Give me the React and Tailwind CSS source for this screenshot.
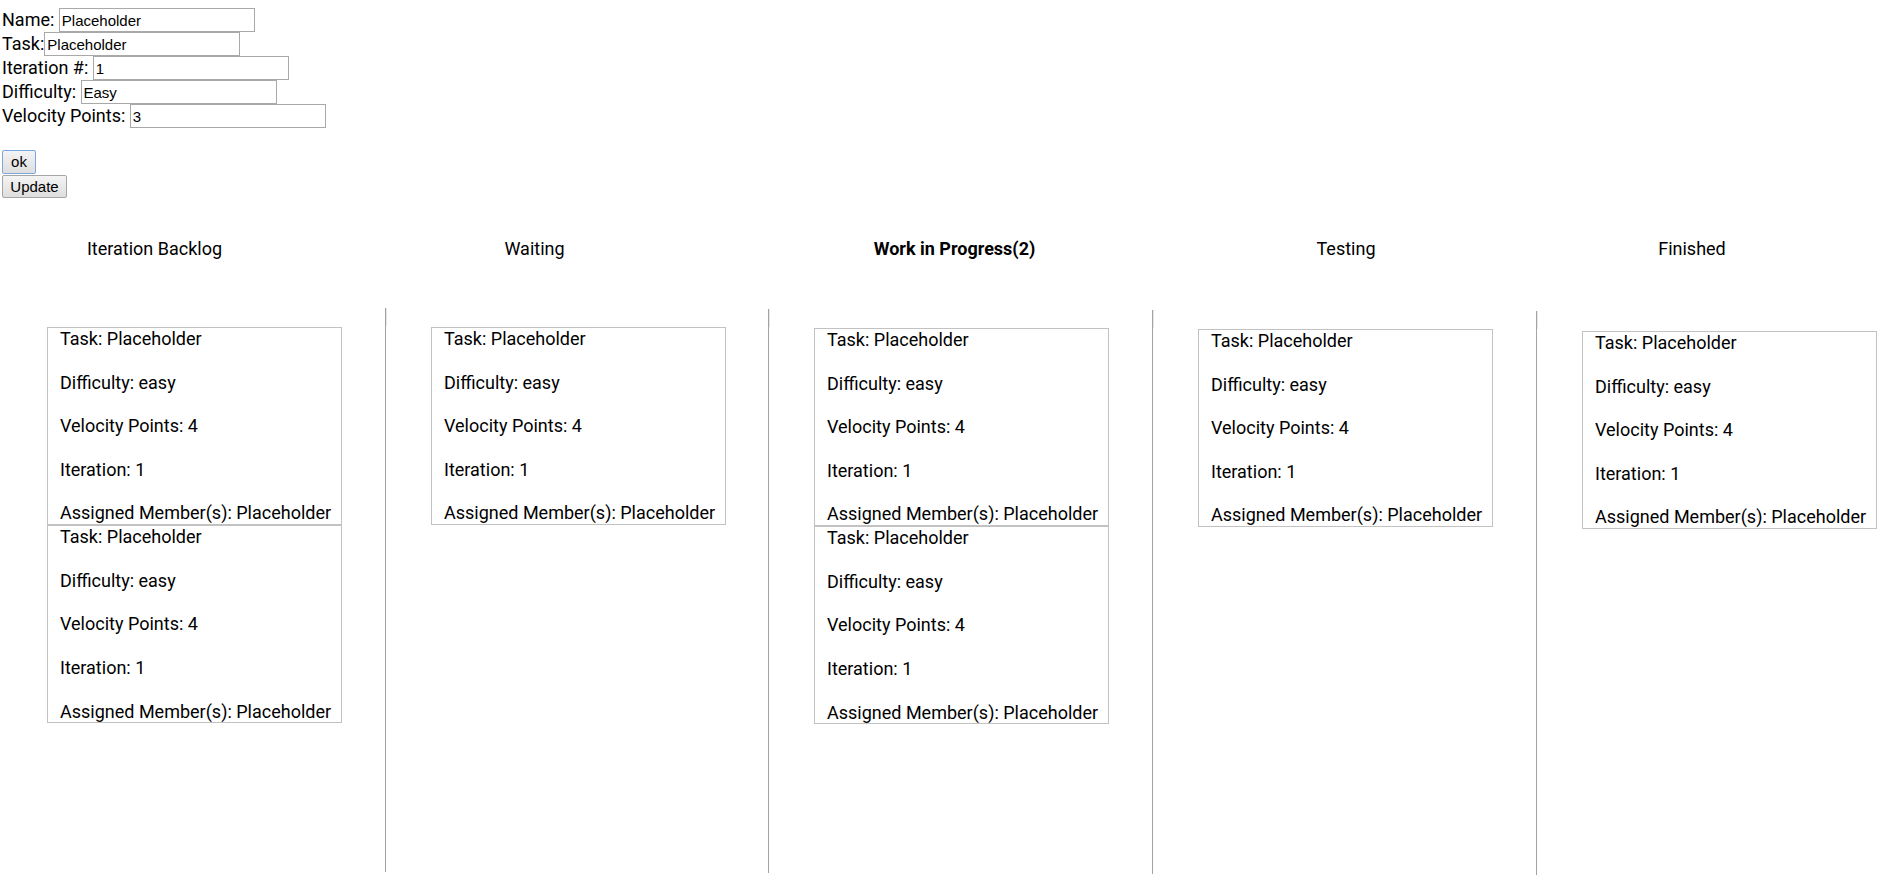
import React from 'react';

const fields = [
  { label: 'Name: ', value: 'Placeholder' },
  { label: 'Task:', value: 'Placeholder' },
  { label: 'Iteration #: ', value: '1' },
  { label: 'Difficulty: ', value: 'Easy' },
  { label: 'Velocity Points: ', value: '3' },
];

const card = {
  task: 'Placeholder',
  difficulty: 'easy',
  points: 4,
  iteration: 1,
  members: 'Placeholder',
};

// heading boxes are sized so each title lands where the board draws it
const headings = [
  { title: 'Iteration Backlog', box: 'w-[309px]' },
  { title: 'Waiting', box: 'w-[451px]' },
  { title: 'Work in Progress(2)', box: 'w-[389px] font-bold' },
  { title: 'Testing', box: 'w-[394px]' },
  { title: 'Finished', box: 'w-[298px]' },
];

const columns = [
  { id: 'backlog', width: 'w-[385px] border-transparent', top: 'mt-0', cardTop: 'mt-[19px] ml-[46px]', stub: false, cards: [card, card] },
  { id: 'waiting', width: 'w-[383px] border-[#a3a3a3]', top: 'mt-0', cardTop: 'mt-[19px] ml-[44px]', stub: true, cards: [card] },
  { id: 'wip', width: 'w-[384px] border-[#a3a3a3]', top: 'mt-[1px]', cardTop: 'mt-[19px] ml-[44px]', stub: true, cards: [card, card] },
  { id: 'testing', width: 'w-[384px] border-[#a3a3a3]', top: 'mt-[2px]', cardTop: 'mt-[19px] ml-[44px]', stub: true, cards: [card] },
  { id: 'finished', width: 'w-[384px] border-[#a3a3a3]', top: 'mt-[3px]', cardTop: 'mt-[20px] ml-[44px]', stub: true, cards: [card] },
];

const TaskCard = ({ item }) => (
  <div className="w-[295px] border border-[#c2c2c2] bg-white pl-3 flex flex-col gap-[21.8px] leading-[21.8px] whitespace-nowrap">
    <div>Task: {item.task}</div>
    <div>Difficulty: {item.difficulty}</div>
    <div>Velocity Points: {item.points}</div>
    <div>Iteration: {item.iteration}</div>
    <div>Assigned Member(s): {item.members}</div>
  </div>
);

const App = () => {
  return (
    <div className="w-full min-h-screen overflow-hidden bg-white text-black text-[18px] font-['Roboto',sans-serif]">
      <div className="pt-2 pl-[2px] flex flex-col">
        {fields.map((f) => (
          <div key={f.label} className="flex items-center h-6 leading-[22px]">
            <span className="whitespace-pre">{f.label}</span>
            <input
              defaultValue={f.value}
              className="h-6 w-[196px] border border-[#a9a9a9] bg-white px-[2px] text-[15px] text-black font-['Liberation_Sans',Arial,sans-serif] outline-none"
            />
          </div>
        ))}
      </div>

      <div className="mt-[22px] pl-[2px] flex flex-col items-start gap-[1px] font-['Liberation_Sans',Arial,sans-serif] text-[15px]">
        <button className="h-6 w-[34px] border border-[#7ba7e1] rounded-[2px] bg-gradient-to-b from-[#f4f4f4] to-[#dedede] text-black">
          ok
        </button>
        <button className="h-[23px] w-[65px] border border-[#a6a6a6] rounded-[2px] bg-gradient-to-b from-[#f4f4f4] to-[#dedede] text-black">
          Update
        </button>
      </div>

      <div className="mt-[40px] flex leading-[22px]">
        {headings.map((h) => (
          <div key={h.title} className={`${h.box} shrink-0 text-center`}>
            {h.title}
          </div>
        ))}
      </div>

      <div className="mt-[48px] flex items-start">
        {columns.map((col) => (
          <div key={col.id} className={`${col.width} ${col.top} shrink-0 h-[564px] border-l flex items-start`}>
            {col.stub && <div className="w-px h-[18px] bg-[#e6e6e6] shrink-0" />}
            <div className={`${col.cardTop} flex flex-col`}>
              {col.cards.map((c, i) => (
                <TaskCard key={i} item={c} />
              ))}
            </div>
          </div>
        ))}
      </div>
    </div>
  );
};

export default App;
